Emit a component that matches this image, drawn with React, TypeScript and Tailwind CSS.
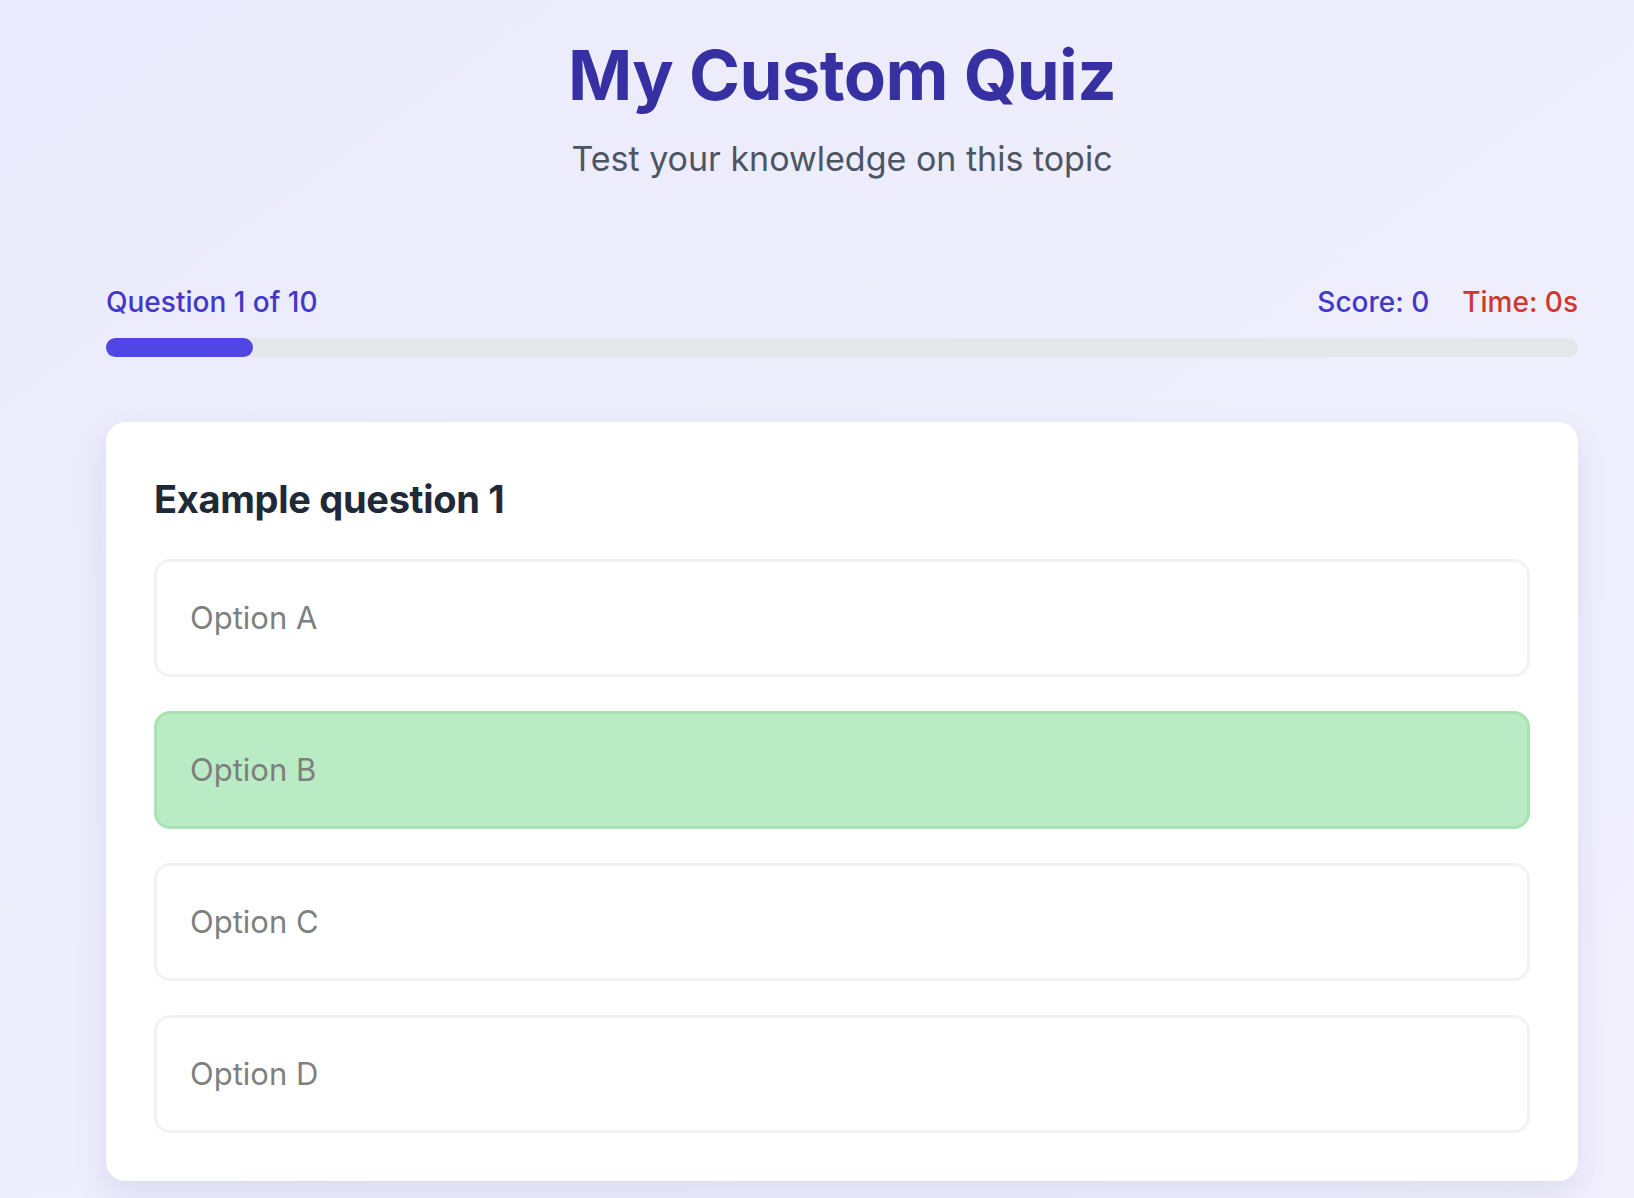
import React from 'react'

const options = ['Option A', 'Option B', 'Option C', 'Option D']
const selected = 1

export default function App() {
  const current = 1
  const total = 10
  const progress = (current / total) * 100

  return (
    <div
      className="min-h-screen w-full bg-gradient-to-br from-[#eaebfc] to-[#f2f0fd] pb-[16px]"
      style={{ fontFamily: 'Inter, "Noto Sans", sans-serif' }}
    >
      <div className="ml-[106px] w-[1472px] flex flex-col">
        {/* Header */}
        <div className="flex flex-col items-center pt-[39px]">
          <h1 className="text-[69px] leading-[72px] font-bold text-[#3730a3] tracking-[-0.6px]">
            My Custom Quiz
          </h1>
          <p className="mt-[24px] text-[34px] leading-[48px] text-[#4b5563]">
            Test your knowledge on this topic
          </p>
        </div>

        {/* Stats */}
        <div className="mt-[99px] flex items-center justify-between text-[28px] leading-[40px] font-medium">
          <span className="text-[#4338ca]">Question {current} of {total}</span>
          <div className="flex gap-[33px]">
            <span className="text-[#4338ca]">Score: 0</span>
            <span className="text-[#d0382f]">Time: 0s</span>
          </div>
        </div>
        <div className="mt-[16px] h-[19px] w-full rounded-full bg-[#e5e7eb]">
          <div className="h-full rounded-full bg-[#4f46e5]" style={{ width: `${progress}%` }} />
        </div>

        {/* Question card */}
        <div className="mt-[65px] rounded-[20px] bg-white p-[48px] shadow-[0_14px_32px_rgba(90,90,170,0.13)]">
          <h2 className="text-[38px] leading-[58px] font-bold text-[#1f2937] tracking-[-0.3px]">
            Example question 1
          </h2>
          <div className="mt-[31px] flex flex-col gap-[34px]">
            {options.map((opt, i) => (
              <button
                key={opt}
                className={
                  i === selected
                    ? 'w-full text-left rounded-[16px] border-[3px] border-[#a9e2b3] bg-[#b9ecc4] px-[33px] py-[36px] text-[31px] leading-[40px] text-[#7f7f7f]'
                    : 'w-full text-left rounded-[16px] border-[3px] border-[#f1f2f4] bg-white px-[33px] py-[36px] text-[31px] leading-[40px] text-[#7f7f7f]'
                }
              >
                {opt}
              </button>
            ))}
          </div>
        </div>
      </div>
    </div>
  )
}
